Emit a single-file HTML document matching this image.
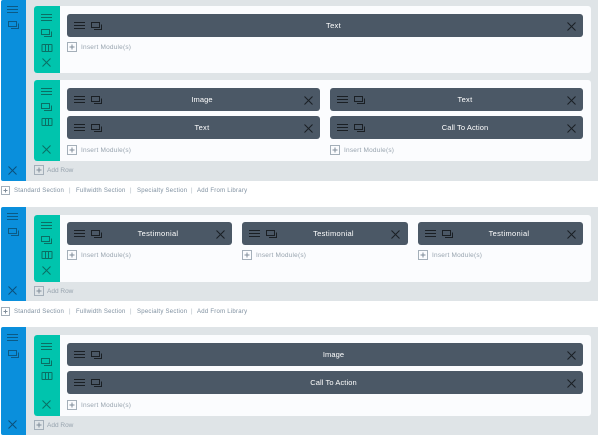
<!DOCTYPE html>
<html><head><meta charset="utf-8"><style>
html,body{margin:0;padding:0;background:#fff}
body{width:600px;height:435px;position:relative;overflow:hidden;font-family:"Liberation Sans",sans-serif}
div{position:absolute;box-sizing:border-box}
.g{background:#dfe4e7;left:26px;width:572px}
.b{background:#0a8fdc;left:1px;width:25px;border-radius:2px 0 0 2px}
.r{background:#fbfcfe;left:34px;width:557px;border-radius:3px}
.t{background:#00c4ad;left:34px;width:26px;border-radius:3px 0 0 3px}
.m{background:#4b5866;height:23px;border-radius:3px;color:#fff;font-size:7.5px;line-height:23px;text-align:center;letter-spacing:.08px;padding-left:17px}
.m.x{letter-spacing:.3px}
.l{font-size:6.5px;color:#97a3ae;line-height:10px;white-space:nowrap;letter-spacing:.2px;margin-top:1px}
.l.a{letter-spacing:0}
.n{font-size:6px;color:#7f90a0;line-height:10px;white-space:nowrap;letter-spacing:.25px;margin-top:1px}
.n.s{color:#a9b4bd}
svg{position:absolute;overflow:visible;fill:none}
</style></head><body>
<svg width="0" height="0" style="position:absolute"><defs>
<g id="h"><path d="M0 .5H11M0 3.500H11M0 6.500H11" stroke-width="1"/></g>
<g id="k"><path d="M.5 .5H8.500V5.500H.5ZM10.500 2.500V7.500H3" stroke-width="1"/></g>
<g id="c"><path d="M.5 1.500H8.500V6.500H.5ZM10.500 3.500V8.500H3" stroke-width="1"/></g>
<g id="x"><path d="M.5 .5L8.500 8.500M8.500 .5L.5 8.500" stroke-width="1"/></g>
<g id="w"><path d="M1.500 .5H10.500Q11 .5 11 1V7Q11 7.500 10.500 7.500H1.500Q1 7.500 1 7V1Q1 .5 1.500 .5ZM4.500 .5V7.500M7.500 .5V7.500" stroke-width="1"/></g>
<g id="p"><path d="M.5 .5H9.500V9.500H.5Z" stroke="#a4afb9" stroke-width="1"/><path d="M2.500 5H7.500M5 2.500V7.500" stroke="#7f8c99" stroke-width="1"/></g>
<g id="q"><path d="M.5 .5H8.500V8.500H.5Z" stroke="#a4afb9" stroke-width="1"/><path d="M2.500 4.500H6.500M4.500 2.500V6.500" stroke="#7f8c99" stroke-width="1"/></g>
</defs></svg>

<!-- section 1 -->
<div class="g" style="top:0;height:181px"></div>
<div class="b" style="top:0;height:181px"></div>
<svg style="left:7px;top:6px" stroke="#0b5a86" width="12" height="8"><use href="#h"/></svg>
<svg style="left:8px;top:21px" stroke="#0b5a86" width="11" height="9"><use href="#k"/></svg>
<svg style="left:8px;top:166px" stroke="#0b4f7a" width="9" height="9"><use href="#x"/></svg>

<div class="r" style="top:6px;height:67px"></div>
<div class="t" style="top:6px;height:67px"></div>
<svg style="left:41px;top:14px" stroke="#0a6f64" width="12" height="8"><use href="#h"/></svg>
<svg style="left:41px;top:29px" stroke="#0a6f64" width="11" height="9"><use href="#k"/></svg>
<svg style="left:41px;top:44px" stroke="#0a6f64" width="12" height="8"><use href="#w"/></svg>
<svg style="left:42px;top:58px" stroke="#0a6f64" width="9" height="9"><use href="#x"/></svg>
<div class="m x" style="left:67px;top:14px;width:516px">Text</div>
<svg style="left:74px;top:22px" stroke="#1a1f24" width="12" height="8"><use href="#h"/></svg>
<svg style="left:91px;top:21px" stroke="#1a1f24" width="11" height="9"><use href="#c"/></svg>
<svg style="left:567px;top:22px" stroke="#1a1f24" width="9" height="9"><use href="#x"/></svg>
<svg style="left:67px;top:42px" width="10" height="10"><use href="#p"/></svg>
<div class="l" style="left:81px;top:42px">Insert Module(s)</div>

<div class="r" style="top:80px;height:81px"></div>
<div class="t" style="top:80px;height:81px"></div>
<svg style="left:41px;top:88px" stroke="#0a6f64" width="12" height="8"><use href="#h"/></svg>
<svg style="left:41px;top:103px" stroke="#0a6f64" width="11" height="9"><use href="#k"/></svg>
<svg style="left:41px;top:118px" stroke="#0a6f64" width="12" height="8"><use href="#w"/></svg>
<svg style="left:42px;top:145px" stroke="#0a6f64" width="9" height="9"><use href="#x"/></svg>

<div class="m" style="left:67px;top:88px;width:253px">Image</div>
<svg style="left:74px;top:96px" stroke="#1a1f24" width="12" height="8"><use href="#h"/></svg>
<svg style="left:91px;top:95px" stroke="#1a1f24" width="11" height="9"><use href="#c"/></svg>
<svg style="left:304px;top:96px" stroke="#1a1f24" width="9" height="9"><use href="#x"/></svg>
<div class="m x" style="left:67px;top:116px;width:253px">Text</div>
<svg style="left:74px;top:124px" stroke="#1a1f24" width="12" height="8"><use href="#h"/></svg>
<svg style="left:91px;top:123px" stroke="#1a1f24" width="11" height="9"><use href="#c"/></svg>
<svg style="left:304px;top:124px" stroke="#1a1f24" width="9" height="9"><use href="#x"/></svg>
<svg style="left:67px;top:145px" width="10" height="10"><use href="#p"/></svg>
<div class="l" style="left:81px;top:145px">Insert Module(s)</div>

<div class="m x" style="left:330px;top:88px;width:253px">Text</div>
<svg style="left:337px;top:96px" stroke="#1a1f24" width="12" height="8"><use href="#h"/></svg>
<svg style="left:354px;top:95px" stroke="#1a1f24" width="11" height="9"><use href="#c"/></svg>
<svg style="left:567px;top:96px" stroke="#1a1f24" width="9" height="9"><use href="#x"/></svg>
<div class="m" style="left:330px;top:116px;width:253px">Call To Action</div>
<svg style="left:337px;top:124px" stroke="#1a1f24" width="12" height="8"><use href="#h"/></svg>
<svg style="left:354px;top:123px" stroke="#1a1f24" width="11" height="9"><use href="#c"/></svg>
<svg style="left:567px;top:124px" stroke="#1a1f24" width="9" height="9"><use href="#x"/></svg>
<svg style="left:330px;top:145px" width="10" height="10"><use href="#p"/></svg>
<div class="l" style="left:344px;top:145px">Insert Module(s)</div>

<svg style="left:34px;top:165px" width="10" height="10"><use href="#p"/></svg>
<div class="l a" style="left:47px;top:165px">Add Row</div>

<svg style="left:1px;top:186px" width="9" height="9"><use href="#q"/></svg>
<div class="n" style="left:14px;top:185px">Standard Section</div>
<div class="n s" style="left:69px;top:185px">|</div>
<div class="n" style="left:76px;top:185px">Fullwidth Section</div>
<div class="n s" style="left:130px;top:185px">|</div>
<div class="n" style="left:137px;top:185px">Specialty Section</div>
<div class="n s" style="left:191px;top:185px">|</div>
<div class="n" style="left:197px;top:185px">Add From Library</div>

<!-- section 2 -->
<div class="g" style="top:207px;height:94px"></div>
<div class="b" style="top:207px;height:94px"></div>
<svg style="left:7px;top:213px" stroke="#0b5a86" width="12" height="8"><use href="#h"/></svg>
<svg style="left:8px;top:228px" stroke="#0b5a86" width="11" height="9"><use href="#k"/></svg>
<svg style="left:8px;top:286px" stroke="#0b4f7a" width="9" height="9"><use href="#x"/></svg>

<div class="r" style="top:215px;height:67px"></div>
<div class="t" style="top:215px;height:67px"></div>
<svg style="left:41px;top:222px" stroke="#0a6f64" width="12" height="8"><use href="#h"/></svg>
<svg style="left:41px;top:236px" stroke="#0a6f64" width="11" height="9"><use href="#k"/></svg>
<svg style="left:41px;top:251px" stroke="#0a6f64" width="12" height="8"><use href="#w"/></svg>
<svg style="left:42px;top:266px" stroke="#0a6f64" width="9" height="9"><use href="#x"/></svg>

<div class="m x" style="left:67px;top:222px;width:165px">Testimonial</div>
<svg style="left:74px;top:230px" stroke="#1a1f24" width="12" height="8"><use href="#h"/></svg>
<svg style="left:91px;top:229px" stroke="#1a1f24" width="11" height="9"><use href="#c"/></svg>
<svg style="left:216px;top:230px" stroke="#1a1f24" width="9" height="9"><use href="#x"/></svg>
<svg style="left:67px;top:250px" width="10" height="10"><use href="#p"/></svg>
<div class="l" style="left:81px;top:250px">Insert Module(s)</div>

<div class="m x" style="left:242px;top:222px;width:166px">Testimonial</div>
<svg style="left:249px;top:230px" stroke="#1a1f24" width="12" height="8"><use href="#h"/></svg>
<svg style="left:266px;top:229px" stroke="#1a1f24" width="11" height="9"><use href="#c"/></svg>
<svg style="left:391px;top:230px" stroke="#1a1f24" width="9" height="9"><use href="#x"/></svg>
<svg style="left:242px;top:250px" width="10" height="10"><use href="#p"/></svg>
<div class="l" style="left:256px;top:250px">Insert Module(s)</div>

<div class="m x" style="left:418px;top:222px;width:165px">Testimonial</div>
<svg style="left:425px;top:230px" stroke="#1a1f24" width="12" height="8"><use href="#h"/></svg>
<svg style="left:442px;top:229px" stroke="#1a1f24" width="11" height="9"><use href="#c"/></svg>
<svg style="left:567px;top:230px" stroke="#1a1f24" width="9" height="9"><use href="#x"/></svg>
<svg style="left:418px;top:250px" width="10" height="10"><use href="#p"/></svg>
<div class="l" style="left:432px;top:250px">Insert Module(s)</div>

<svg style="left:34px;top:286px" width="10" height="10"><use href="#p"/></svg>
<div class="l a" style="left:47px;top:286px">Add Row</div>

<svg style="left:1px;top:307px" width="9" height="9"><use href="#q"/></svg>
<div class="n" style="left:14px;top:306px">Standard Section</div>
<div class="n s" style="left:69px;top:306px">|</div>
<div class="n" style="left:76px;top:306px">Fullwidth Section</div>
<div class="n s" style="left:130px;top:306px">|</div>
<div class="n" style="left:137px;top:306px">Specialty Section</div>
<div class="n s" style="left:191px;top:306px">|</div>
<div class="n" style="left:197px;top:306px">Add From Library</div>

<!-- section 3 -->
<div class="g" style="top:327px;height:108px"></div>
<div class="b" style="top:327px;height:108px"></div>
<svg style="left:7px;top:334px" stroke="#0b5a86" width="12" height="8"><use href="#h"/></svg>
<svg style="left:8px;top:350px" stroke="#0b5a86" width="11" height="9"><use href="#k"/></svg>
<svg style="left:8px;top:420px" stroke="#0b4f7a" width="9" height="9"><use href="#x"/></svg>

<div class="r" style="top:335px;height:81px"></div>
<div class="t" style="top:335px;height:81px"></div>
<svg style="left:41px;top:343px" stroke="#0a6f64" width="12" height="8"><use href="#h"/></svg>
<svg style="left:41px;top:358px" stroke="#0a6f64" width="11" height="9"><use href="#k"/></svg>
<svg style="left:41px;top:372px" stroke="#0a6f64" width="12" height="8"><use href="#w"/></svg>
<svg style="left:42px;top:400px" stroke="#0a6f64" width="9" height="9"><use href="#x"/></svg>

<div class="m" style="left:67px;top:343px;width:516px">Image</div>
<svg style="left:74px;top:351px" stroke="#1a1f24" width="12" height="8"><use href="#h"/></svg>
<svg style="left:91px;top:350px" stroke="#1a1f24" width="11" height="9"><use href="#c"/></svg>
<svg style="left:567px;top:351px" stroke="#1a1f24" width="9" height="9"><use href="#x"/></svg>
<div class="m" style="left:67px;top:371px;width:516px">Call To Action</div>
<svg style="left:74px;top:379px" stroke="#1a1f24" width="12" height="8"><use href="#h"/></svg>
<svg style="left:91px;top:378px" stroke="#1a1f24" width="11" height="9"><use href="#c"/></svg>
<svg style="left:567px;top:379px" stroke="#1a1f24" width="9" height="9"><use href="#x"/></svg>
<svg style="left:67px;top:400px" width="10" height="10"><use href="#p"/></svg>
<div class="l" style="left:81px;top:400px">Insert Module(s)</div>

<svg style="left:34px;top:420px" width="10" height="10"><use href="#p"/></svg>
<div class="l a" style="left:47px;top:420px">Add Row</div>
</body></html>
